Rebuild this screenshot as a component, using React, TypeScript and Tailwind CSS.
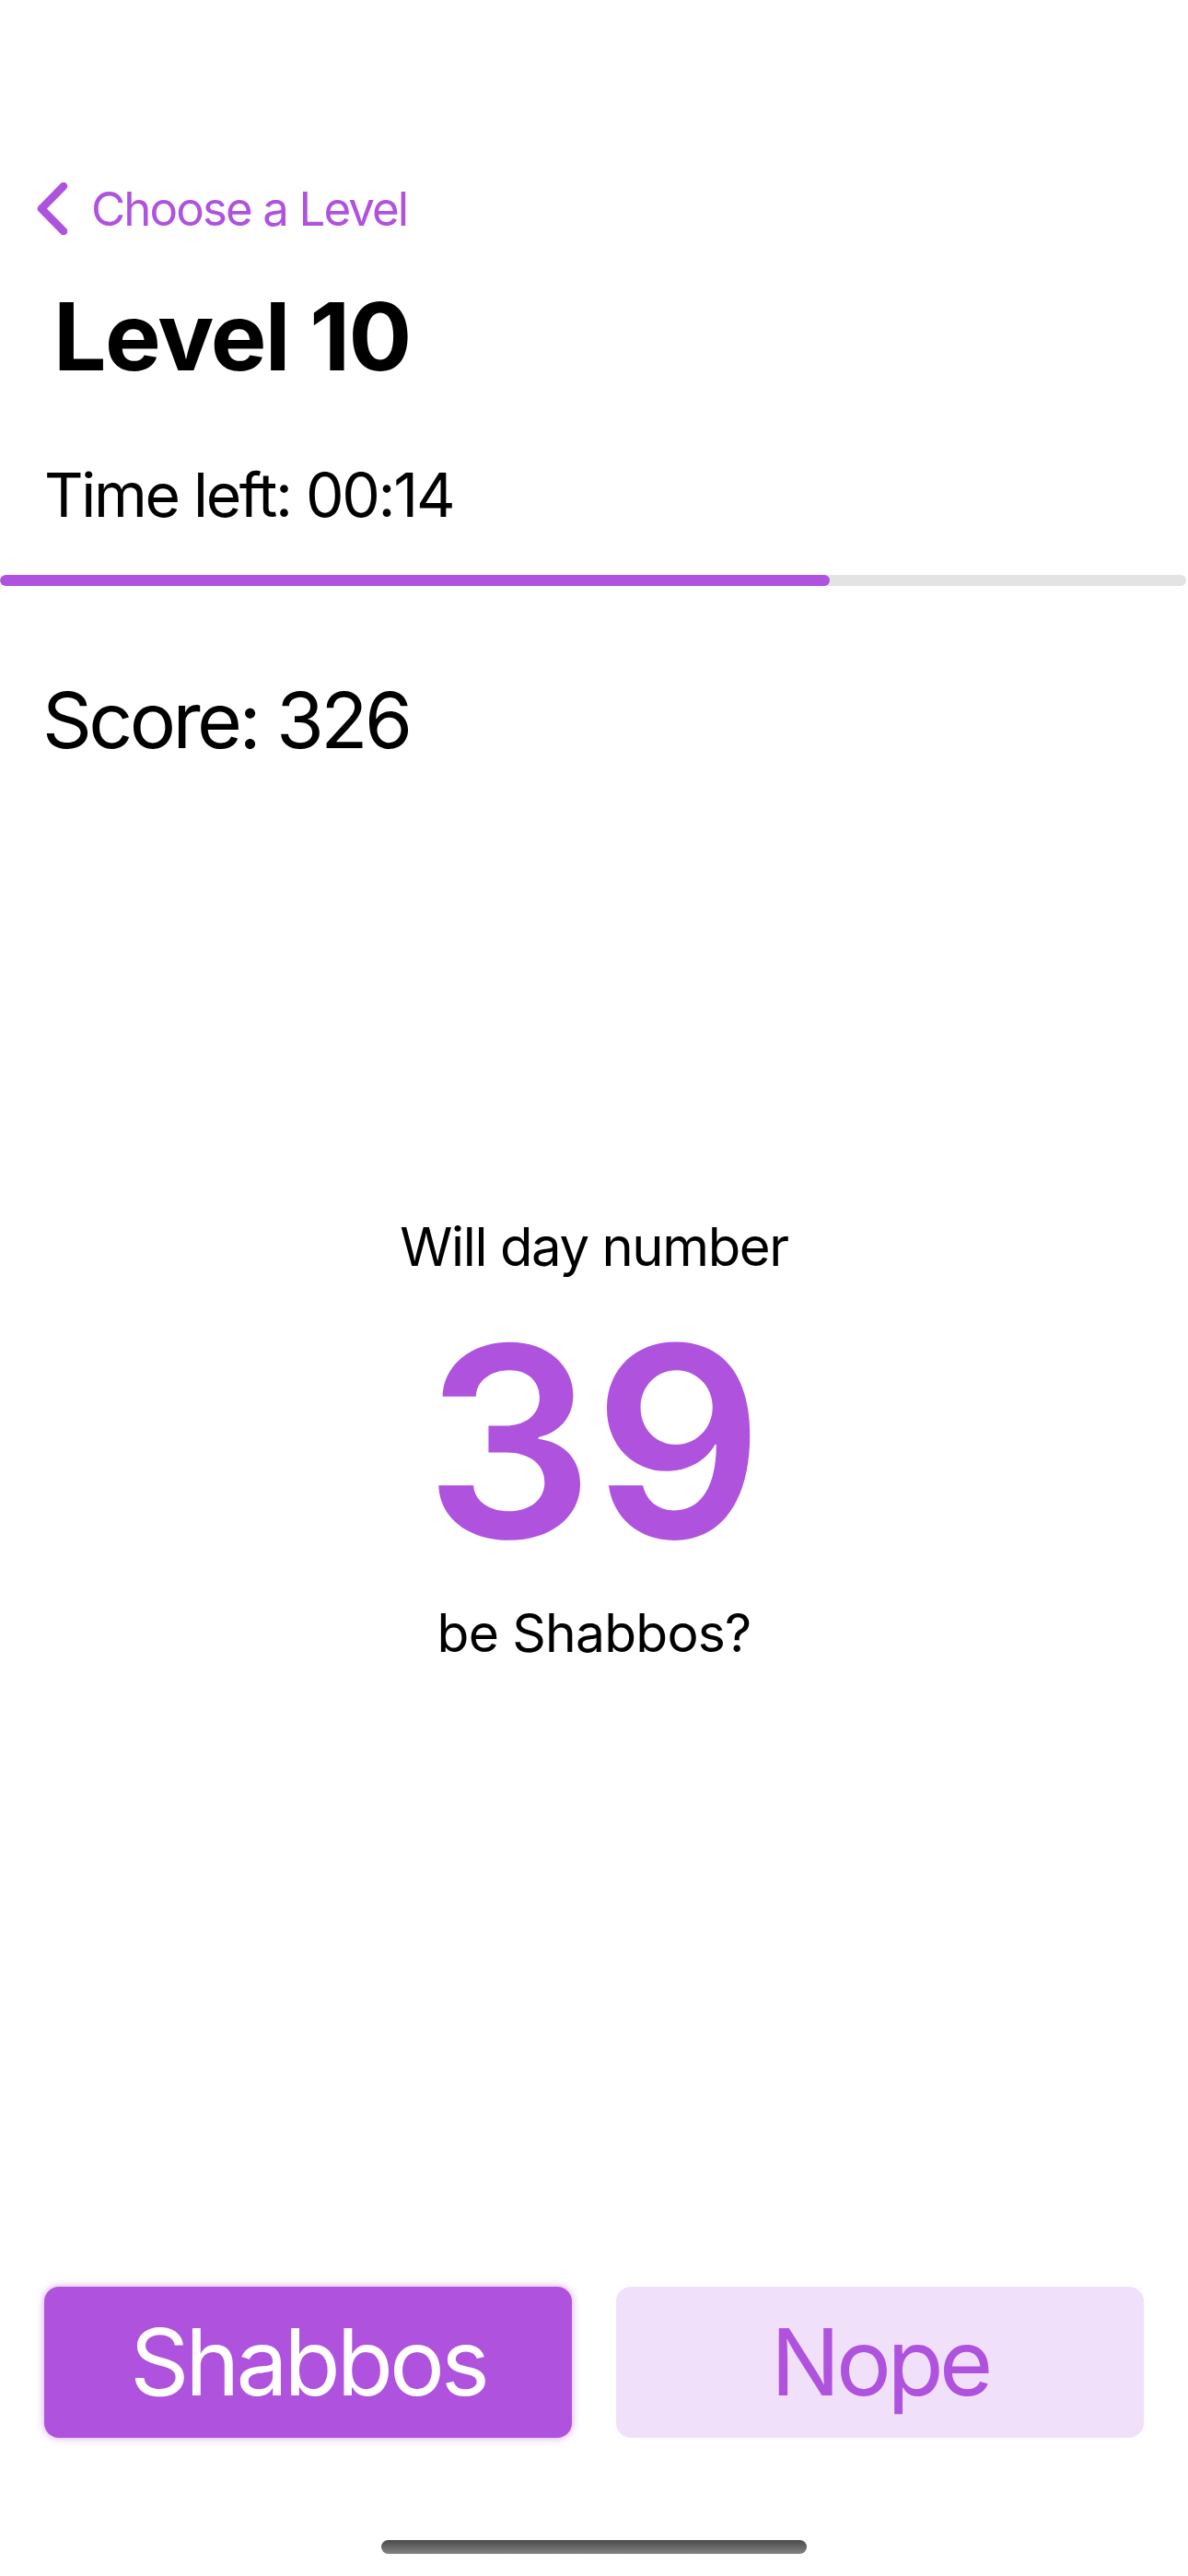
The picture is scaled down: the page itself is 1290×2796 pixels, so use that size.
import React from "react";

export default function App() {
  const progress = 902 / 1290;
  return (
    <div
      className="w-[1290px] h-[2796px] bg-white flex flex-col text-black overflow-hidden"
      style={{ fontFamily: "Inter, 'Noto Sans', sans-serif" }}
    >
      {/* Back nav */}
      <div className="mt-[198px] h-[57px] flex items-center pl-[40px]">
        <svg width="34" height="57" viewBox="0 0 34 57" fill="none">
          <path
            d="M29 4 L5 28.5 L29 53"
            stroke="#AF52DE"
            strokeWidth="8.5"
            strokeLinecap="round"
            strokeLinejoin="round"
          />
        </svg>
        <span className="ml-[25px] text-[51px] leading-none text-[#AF52DE] tracking-[-1.9px]">
          Choose a Level
        </span>
      </div>

      {/* Title */}
      <div className="mt-[59px] h-[102px] pl-[58px] text-[102px] leading-none font-bold tracking-[-1.7px]">
        Level 10
      </div>

      {/* Time left */}
      <div className="mt-[88px] h-[66px] pl-[48px] text-[66px] leading-none tracking-[-2.3px]">
        Time left: 00:14
      </div>

      {/* Progress bar */}
      <div className="mt-[54px] h-[12px] w-[1288px] rounded-full bg-[#E3E3E3] overflow-hidden">
        <div
          className="h-full rounded-full bg-[#AF52DE]"
          style={{ width: `${progress * 100}%` }}
        />
      </div>

      {/* Score */}
      <div className="mt-[104px] h-[84px] pl-[46px] text-[84px] leading-none tracking-[-3.6px]">
        Score: 326
      </div>

      {/* Question */}
      <div className="mt-[500px] h-[58px] text-center text-[58px] leading-none tracking-[-1.4px]">
        Will day number
      </div>
      <div className="mt-[38px] h-[290px] text-center text-[288px] leading-none font-semibold text-[#AF52DE] tracking-[0px]">
        39
      </div>
      <div className="mt-[34px] h-[56px] text-center text-[57px] leading-none tracking-[-0.8px]">
        be Shabbos?
      </div>

      {/* Buttons */}
      <div className="mt-[682px] px-[48px] flex gap-[48px]">
        <button className="flex-1 h-[164px] rounded-[16px] bg-[#AF52DE] text-white text-[100px] leading-none tracking-[-4px] shadow-[0_0_9px_rgba(175,82,222,0.55)] flex items-center justify-center">
          Shabbos
        </button>
        <button className="flex-1 h-[164px] rounded-[16px] bg-[#F0E0F9] text-[#AF52DE] text-[100px] leading-none tracking-[-4.5px] flex items-center justify-center">
          Nope
        </button>
      </div>

      {/* Home indicator */}
      <div className="mt-[111px] flex justify-center">
        <div className="w-[462px] h-[15px] rounded-full bg-gradient-to-b from-[#4a4a4a] to-[#858585]" />
      </div>
    </div>
  );
}
